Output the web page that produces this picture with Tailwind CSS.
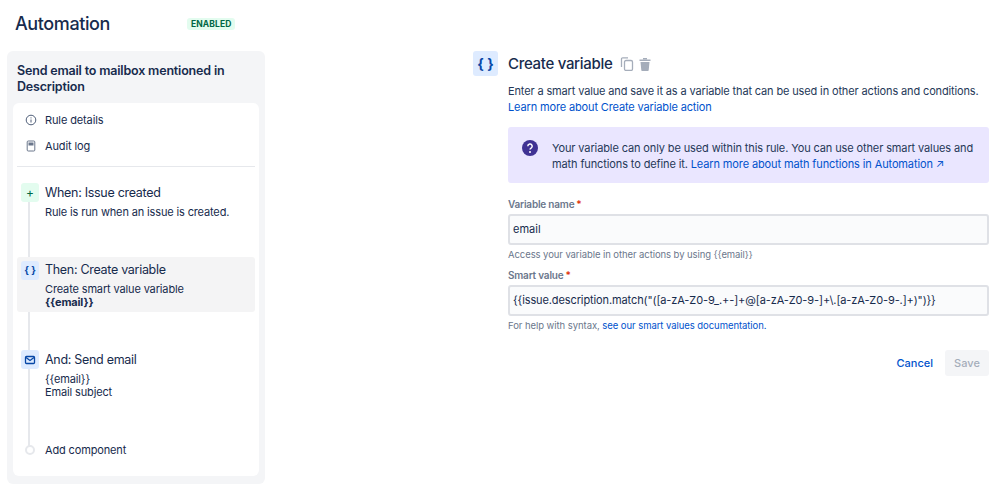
<!DOCTYPE html>
<html lang="en">
<head>
    <meta charset="utf-8"/>
    <title>Automation</title>
    <script src="https://cdn.jsdelivr.net/npm/@tailwindcss/browser@4"></script>
</head>
<body class="bg-white text-[#172b4d] font-['Inter','Liberation_Sans',sans-serif] overflow-hidden">
<div class="flex w-[999px] h-[495px]">

    <!-- left column -->
    <div class="w-[266px] pl-[7px] shrink-0">
        <div class="flex items-center h-[51px] pb-[4px] pl-2">
            <h1 class="text-[18px] leading-6 font-medium w-[172px] tracking-[-0.4px]">Automation</h1>
            <span class="bg-[#e3fcef] text-[#006644] text-[8.5px] leading-3 font-bold tracking-[0.1px] px-[4px] rounded-[3px]">ENABLED</span>
        </div>
        <div class="bg-[#f4f5f7] rounded-[6px] w-[258px] h-[433px] px-[6px] pb-[8px] flex flex-col">
            <h2 class="text-[12.5px] leading-4 font-semibold pl-1 pt-[12px] h-[52px] tracking-[-0.18px]">Send email to mailbox mentioned in Description</h2>
            <div class="bg-white rounded-[6px] grow px-1 relative">
                <div class="h-[64px] border-b border-[#e6e8ec] text-[11px] tracking-[-0.12px]">
                    <div class="flex items-center h-[27px] pt-[7px]">
                        <svg class="ml-2 w-3 h-3 text-[#505f79]" viewBox="0 0 12 12" fill="none" stroke="currentColor"><circle cx="6" cy="6" r="4.8"/><path d="M6 5.5v3M6 3.4v1"/></svg>
                        <span class="ml-[8px]">Rule details</span>
                    </div>
                    <div class="flex items-center h-[27px] pt-[5px]">
                        <svg class="ml-2 w-3 h-3 text-[#6b778c]" viewBox="0 0 12 12" fill="none" stroke="currentColor"><rect x="2.2" y="1" width="7.6" height="10" rx="1"/><rect x="3.5" y="2.5" width="5" height="3" fill="currentColor" stroke="none"/></svg>
                        <span class="ml-[8px]">Audit log</span>
                    </div>
                </div>

                <!-- timeline line -->
                <div class="absolute left-[15px] top-[90px] w-[2px] h-[258px] bg-[#e6e8ec]"></div>

                <div class="relative flex mt-[16px] h-[74px]">
                    <div class="ml-[4px] w-[18px] h-[19px] rounded-[3px] bg-[#e3fcef] text-[#006644] flex items-center justify-center text-[12px]">+</div>
                    <div class="ml-[6px]">
                        <div class="text-[12.5px] leading-[19px] tracking-[-0.3px]">When: Issue created</div>
                        <div class="text-[11px] leading-[13px] mt-[4px] tracking-[-0.14px]">Rule is run when an issue is created.</div>
                    </div>
                </div>

                <div class="relative flex bg-[#f4f4f5] rounded-[3px] h-[55px] pt-[4px]">
                    <div class="ml-[4px] w-[18px] h-[19px] rounded-[3px] bg-[#deebff] text-[#0747a6] flex items-center justify-center text-[10px] font-bold">{ }</div>
                    <div class="ml-[6px] -mt-[1px]">
                        <div class="text-[12.5px] leading-[19px] tracking-[-0.3px]">Then: Create variable</div>
                        <div class="text-[11px] leading-[13px] mt-[4px] tracking-[-0.14px]">Create smart value variable<br/><b class="font-bold">{{email}}</b></div>
                    </div>
                </div>

                <div class="relative flex mt-[38px] h-[83px]">
                    <div class="ml-[4px] w-[18px] h-[19px] rounded-[3px] bg-[#deebff] flex items-center justify-center">
                        <svg class="w-3 h-3 text-[#0747a6]" viewBox="0 0 12 12" fill="none" stroke="currentColor" stroke-width="1.3"><rect x="1.5" y="2.5" width="9" height="7" rx="1"/><path d="M2 3.5l4 3 4-3"/></svg>
                    </div>
                    <div class="ml-[6px]">
                        <div class="text-[12.5px] leading-[19px] tracking-[-0.3px]">And: Send email</div>
                        <div class="text-[11px] leading-[13px] mt-[4px] tracking-[-0.14px]">{{email}}<br/>Email subject</div>
                    </div>
                </div>

                <div class="relative flex items-center h-[20px] mt-[7px]">
                    <div class="ml-[8px] w-[10px] h-[10px] rounded-full bg-white border-2 border-[#e6e8ec]"></div>
                    <span class="ml-[10px] text-[11px] tracking-[-0.14px]">Add component</span>
                </div>
            </div>
        </div>
    </div>

    <!-- right column -->
    <div class="ml-[207px] w-[516px] pt-[51px]">
        <div class="flex">
            <div class="w-[25px] h-[25px] rounded-[3px] bg-[#deebff] text-[#0747a6] flex items-center justify-center text-[14px] font-bold">{ }</div>
            <div class="ml-[10px] w-[481px]">
                <div class="flex items-center h-[25px] pt-[1px]">
                    <h2 class="text-[15px] leading-6 font-medium tracking-[-0.3px]">Create variable</h2>
                    <svg class="ml-2 w-[14px] h-[14px] text-[#a5adba]" viewBox="0 0 14 14" fill="none" stroke="currentColor" stroke-width="1.3"><rect x="4.5" y="3.5" width="8" height="10" rx="1.5"/><path d="M1.5 10V2a1.2 1.2 0 0 1 1.2-1.2H8"/></svg>
                    <svg class="ml-[4px] w-[14px] h-[14px] text-[#a5adba]" viewBox="0 0 14 14" fill="currentColor"><path d="M1.5 2.5h11v1.5h-11z"/><path d="M5 1h4v1.5H5z"/><path d="M2.5 5h9l-.8 8.2a.8.8 0 0 1-.8.8H4.1a.8.8 0 0 1-.8-.8z"/></svg>
                </div>
                <p class="text-[11px] leading-4 mt-[7px] text-[#253858] whitespace-nowrap tracking-[-0.14px]">Enter a smart value and save it as a variable that can be used in other actions and conditions.<br/><a href="#" class="text-[#0052cc]">Learn more about Create variable action</a></p>

                <div class="flex bg-[#eae6ff] rounded-[3px] h-[56px] mt-[12px] pt-[13px] pl-[14px]">
                    <svg class="w-4 h-4 shrink-0" viewBox="0 0 16 16"><circle cx="8" cy="8" r="8" fill="#403294"/><path d="M5.8 6.2a2.2 2.2 0 1 1 3.3 1.9c-.7.4-1.1.8-1.1 1.5" fill="none" stroke="#fff" stroke-width="1.5"/><circle cx="8" cy="12" r="1" fill="#fff"/></svg>
                    <p class="ml-[14px] text-[11px] leading-4 text-[#253858] whitespace-nowrap tracking-[-0.12px]">Your variable can only be used within this rule. You can use other smart values and<br/>math functions to define it. <a href="#" class="text-[#0052cc]">Learn more about math functions in Automation ↗</a></p>
                </div>

                <label class="block text-[10px] leading-[14px] font-semibold text-[#6b778c] mt-[14px] tracking-[-0.2px]">Variable name<span class="text-[#de350b] ml-[2px]">*</span></label>
                <div class="h-[31px] mt-[3px] bg-[#fafbfc] border-2 border-[#dfe1e6] rounded-[3px] text-[11px] leading-[27px] px-[3px]">email</div>
                <p class="text-[9.5px] leading-[14px] mt-[3px] text-[#6b778c] tracking-[-0.08px]">Access your variable in other actions by using {{email}}</p>

                <label class="block text-[10px] leading-[14px] font-semibold text-[#6b778c] mt-[6px] tracking-[-0.2px]">Smart value<span class="text-[#de350b] ml-[2px]">*</span></label>
                <div class="h-[31px] mt-[3px] bg-[#fafbfc] border-2 border-[#dfe1e6] rounded-[3px] text-[11px] leading-[27px] px-[3px] whitespace-nowrap tracking-[-0.11px]">{{issue.description.match("([a-zA-Z0-9_.+-]+@[a-zA-Z0-9-]+\.[a-zA-Z0-9-.]+)")}}</div>
                <p class="text-[9.5px] leading-[14px] mt-[3px] text-[#6b778c] tracking-[-0.06px]">For help with syntax, <a href="#" class="text-[#0052cc]">see our smart values documentation.</a></p>

                <div class="flex justify-end items-center mt-[17px]">
                    <a href="#" class="text-[11px] font-medium text-[#0052cc]">Cancel</a>
                    <button class="ml-[12px] w-[44px] h-[26px] bg-[#f4f5f7] rounded-[3px] text-[11px] font-medium text-[#a5adba]">Save</button>
                </div>
            </div>
        </div>
    </div>
</div>
</body>
</html>
